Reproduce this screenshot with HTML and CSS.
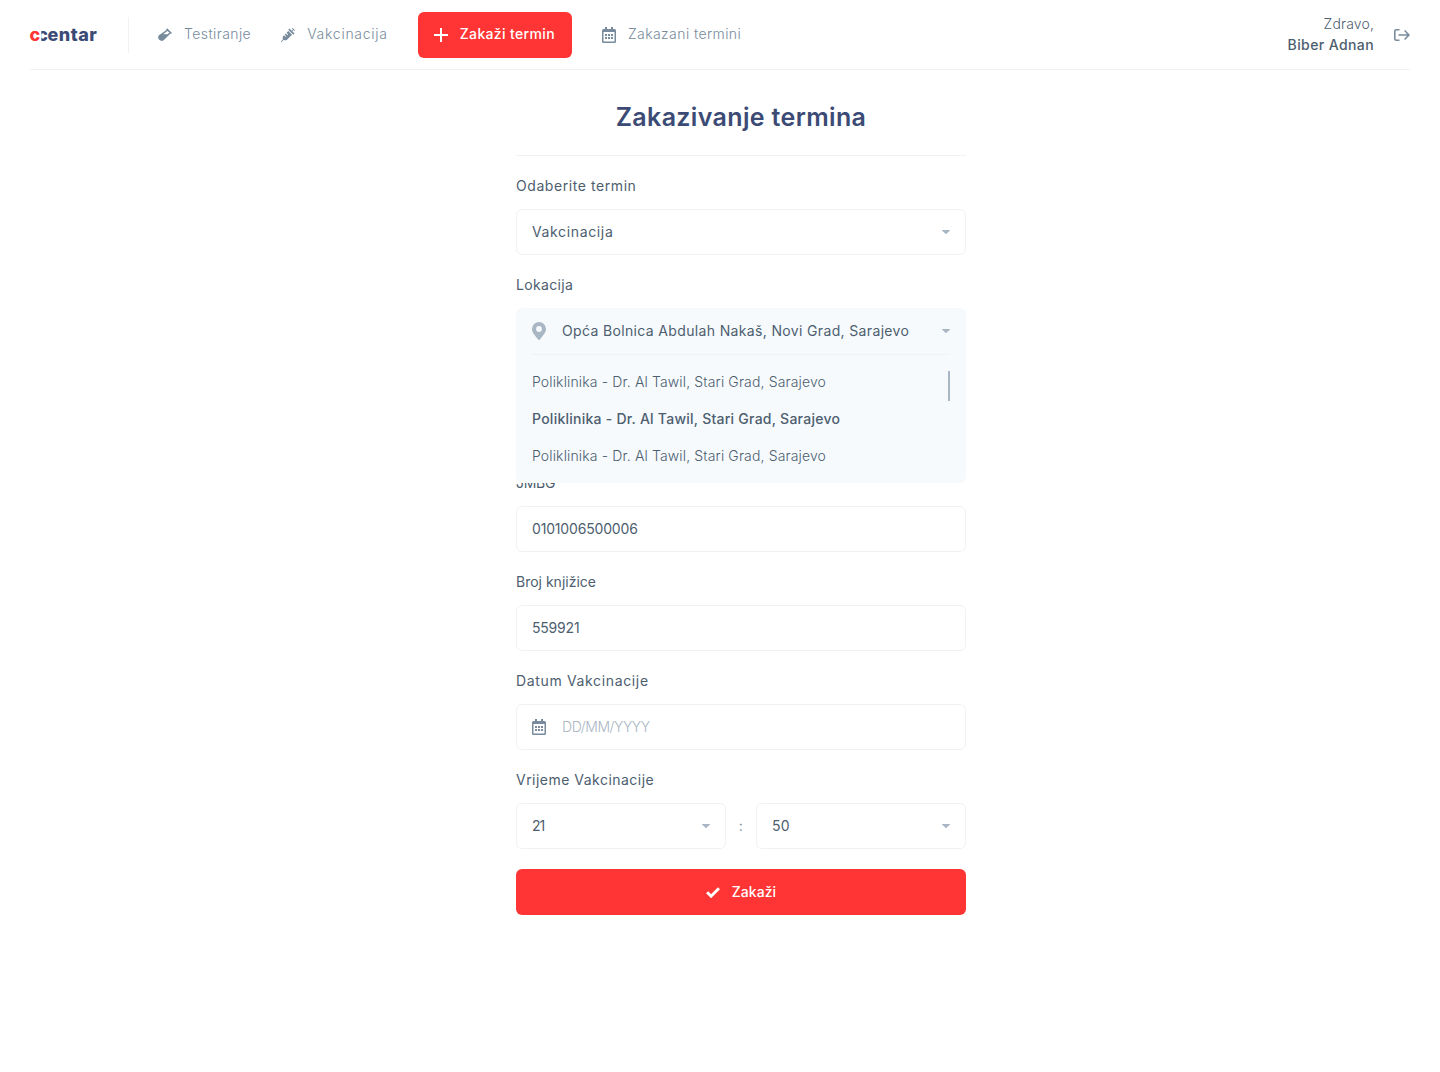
FILE: index.html
```html
<!DOCTYPE html>
<html lang="bs">
<head>
<meta charset="utf-8">
<title>Zakazivanje termina</title>
<link rel="stylesheet" href="styles.css">
</head>
<body>
<svg class="sprite" aria-hidden="true">
  <symbol id="calendar" viewBox="0 0 14 16"><path fill-rule="evenodd" d="M3 0h2v2h4V0h2v2h1.500a1.500 1.500 0 0 1 1.500 1.500v11a1.500 1.500 0 0 1-1.500 1.500h-11A1.500 1.500 0 0 1 0 14.500v-11A1.500 1.500 0 0 1 1.500 2H3zM1.500 5v9.200c0 .2.100.300.300.300h10.400c.2 0 .300-.1.300-.3V5zM3 7h2v2H3zM6 7h2v2H6zM9 7h2v2H9zM3 10h2v2H3zM6 10h2v2H6zM9 10h2v2H9z"/></symbol>
  <symbol id="caret" viewBox="0 0 8 4"><path d="M.6 0h6.800c.5 0 .7.400.400.700L4.500 3.800a.7.700 0 0 1-1 0L.2.700C-.1.400.1 0 .6 0z"/></symbol>
</svg>

<header class="header">
  <div class="logo"><span class="logo-c">c</span><span class="logo-cut">c</span><span class="logo-rest">entar</span></div>
  <nav class="nav">
    <a class="nav-item"><svg class="icon14" viewBox="0 0 14 14"><path fill-rule="evenodd" d="M9.200.3 14 4.900l-1 1-.5-.4-6.600 6.600A3.500 3.500 0 0 1 .9 7.300L8.500 1.900 8.100 1.500zM9.300 2.900 5.200 6.200h4.300l2-1.800z"/></svg><span class="text w-test">Testiranje</span></a>
    <a class="nav-item"><svg class="icon14" viewBox="0 0 512 512"><path d="M201.500 174.800l55.700 55.800c3.100 3.100 3.100 8.200 0 11.300l-11.300 11.300c-3.100 3.100-8.200 3.100-11.300 0l-55.700-55.800-45.300 45.300 55.800 55.800c3.100 3.100 3.100 8.200 0 11.300l-11.300 11.300c-3.100 3.100-8.200 3.100-11.300 0L111 265.200l-26.400 26.400c-17.300 17.300-25.600 41.100-23 65.400l7.100 63.600L2.300 487c-3.100 3.100-3.100 8.200 0 11.300l11.300 11.300c3.100 3.100 8.200 3.100 11.300 0l66.300-66.300 63.600 7.100c23.900 2.600 47.900-5.400 65.400-23l181.900-181.900-135.700-135.700-64.900 65zm308.200-93.300L430.500 2.300c-3.100-3.100-8.200-3.100-11.300 0l-11.300 11.300c-3.100 3.100-3.100 8.200 0 11.300l28.300 28.300-45.300 45.300-56.600-56.600-17-17c-3.100-3.100-8.200-3.100-11.300 0l-33.900 33.900c-3.100 3.100-3.100 8.200 0 11.300l17 17L424.800 223l17 17c3.100 3.100 8.200 3.100 11.300 0l33.900-34c3.100-3.100 3.100-8.200 0-11.300l-73.500-73.500 45.300-45.300 28.300 28.300c3.100 3.100 8.200 3.100 11.300 0l11.300-11.300c3.100-3.200 3.100-8.200 0-11.400z"/></svg><span class="text w-vak">Vakcinacija</span></a>
    <a class="nav-item nav-active"><svg class="icon14" viewBox="0 0 14 14"><path d="M6 0h2v6h6v2H8v6H6V8H0V6h6z"/></svg><span class="text">Zakaži termin</span></a>
    <a class="nav-item"><svg class="cal"><use href="#calendar"/></svg><span class="text w-term">Zakazani termini</span></a>
  </nav>
  <div class="user">
    <div class="greeting"><span class="text hello">Zdravo,</span><span class="text name">Biber Adnan</span></div>
    <svg class="logout" viewBox="0 0 16 12"><path d="M5.500.8H2.300C1.400.8.8 1.400.8 2.300v7.400c0 .9.600 1.500 1.500 1.500h3.200M4.500 6h10.300M10.600 1.500 15 6l-4.400 4.500" fill="none" stroke="currentColor" stroke-width="1.600"/></svg>
  </div>
</header>

<main class="form">
  <h1 class="title">Zakazivanje termina</h1>
  <div class="field">
    <div class="text l-oda">Odaberite termin</div>
    <div class="box"><span class="text w-sel">Vakcinacija</span><svg class="caret"><use href="#caret"/></svg></div>
  </div>
  <div class="field field-open">
    <div class="text">Lokacija</div>
    <div class="anchor">
      <div class="dropdown">
        <div class="dropdown-head">
          <svg class="pin" viewBox="0 0 14 18"><path fill-rule="evenodd" d="M7 0a7 7 0 0 1 7 7c0 2.800-1.200 4.200-6.200 10.600a1 1 0 0 1-1.600 0C1.200 11.200 0 9.800 0 7a7 7 0 0 1 7-7zm0 4.100a2.900 2.900 0 1 0 0 5.800 2.900 2.900 0 0 0 0-5.800z"/></svg>
          <span class="text">Opća Bolnica Abdulah Nakaš, Novi Grad, Sarajevo</span>
          <svg class="caret"><use href="#caret"/></svg>
        </div>
        <div class="options">
          <div class="option-list">
            <div class="option">Poliklinika - Dr. Al Tawil, Stari Grad, Sarajevo</div>
            <div class="option option-on">Poliklinika - Dr. Al Tawil, Stari Grad, Sarajevo</div>
            <div class="option">Poliklinika - Dr. Al Tawil, Stari Grad, Sarajevo</div>
          </div>
          <div class="thumb"></div>
        </div>
      </div>
    </div>
  </div>
  <div class="field">
    <div class="text l-jmbg">JMBG</div>
    <div class="box"><span class="text w-num">0101006500006</span></div>
  </div>
  <div class="field">
    <div class="text l-broj">Broj knjižice</div>
    <div class="box"><span class="text w-broj">559921</span></div>
  </div>
  <div class="field">
    <div class="text l-dat">Datum Vakcinacije</div>
    <div class="box"><svg class="cal"><use href="#calendar"/></svg><span class="text placeholder">DD/MM/YYYY</span></div>
  </div>
  <div class="field">
    <div class="text l-vri">Vrijeme Vakcinacije</div>
    <div class="time">
      <div class="box"><span class="text w-21">21</span><svg class="caret"><use href="#caret"/></svg></div>
      <span class="text colon">:</span>
      <div class="box"><span class="text">50</span><svg class="caret"><use href="#caret"/></svg></div>
    </div>
  </div>
  <button class="submit"><svg class="check" viewBox="0 0 14 11"><path d="m1.100 5.200 4 4 7.900-7.900" fill="none" stroke="currentColor" stroke-width="2.900"/></svg><span class="text">Zakaži</span></button>
</main>
</body>
</html>
```
FILE: styles.css
```css
* { box-sizing: border-box; }
body {
  margin: 0;
  background: #fff;
  color: #4d5e6f;
  font: 400 14px/21px Inter, "Open Sans", sans-serif;
  letter-spacing: .35px;
  white-space: nowrap;
}
svg { fill: currentColor; flex: none; }
.sprite { display: none; }

/* Single line of text, raised to sit on the optical centre of its row */
.text { display: block; line-height: 19px; padding-bottom: 2px; }

.header {
  display: flex;
  align-items: center;
  height: 70px;
  margin: 0 30px;
  border-bottom: 1px solid #f1f2f6;
}
.logo {
  display: flex;
  width: 99px;
  height: 36px;
  border-right: 1px solid #f1f2f6;
  font-weight: 800;
  font-size: 18px;
  line-height: 36px;
  letter-spacing: .5px;
  color: #3c4b75;
}
.logo-c { margin-left: -.5px; letter-spacing: 0; color: #ff3535; }
.logo-cut { margin-left: -3px; margin-right: -.5px; letter-spacing: 0; clip-path: inset(0 0 0 38%); }
.nav { display: flex; align-items: center; margin-left: 29px; color: #778b9c; font-weight: 300; }
.nav-item { display: flex; align-items: center; gap: 12px; margin-right: 30px; }
.nav-active {
  height: 46px;
  padding: 0 17px 0 16px;
  border-radius: 6px;
  background: #ff3535;
  color: #fff;
  font-weight: 500;
}
.w-test { letter-spacing: .42px; }
.w-vak { letter-spacing: .73px; }
.w-term { letter-spacing: .42px; }
.icon14 { width: 14px; height: 14px; }
.cal { width: 14px; height: 16px; color: #778b9c; }
.user { display: flex; align-items: center; gap: 20px; margin-left: auto; }
.greeting { display: flex; flex-direction: column; align-items: flex-end; }
.hello { font-weight: 300; letter-spacing: .15px; }
.name { font-weight: 500; letter-spacing: .4px; }
.logout { width: 16px; height: 12px; color: #778b9c; }

.form { width: 450px; margin: 0 0 0 516px; }
.title {
  height: 86px;
  margin: 0 0 20px;
  padding-top: 29px;
  border-bottom: 1px solid #f1f2f6;
  text-align: center;
  font-weight: 600;
  font-size: 25px;
  line-height: 36px;
  letter-spacing: .35px;
  color: #3c4b75;
}
.field { display: flex; flex-direction: column; gap: 12px; margin-bottom: 20px; }
.field-open { margin-bottom: 119px; }
.l-oda { letter-spacing: .57px; }
.l-jmbg { letter-spacing: -.3px; }
.l-broj { letter-spacing: 0; }
.l-dat { letter-spacing: .65px; }
.l-vri { letter-spacing: .48px; }
.w-sel { letter-spacing: .64px; }
.w-num { letter-spacing: -.17px; }
.w-broj { letter-spacing: -.2px; }
.w-21 { letter-spacing: -1px; }
.box {
  display: flex;
  align-items: center;
  gap: 16px;
  height: 46px;
  padding: 0 15px;
  border: 1px solid #f1f2f6;
  border-radius: 6px;
}
.caret { width: 8px; height: 4px; margin-left: auto; color: #a9b6c3; }
.placeholder { color: #a9b6c3; font-weight: 300; letter-spacing: -.42px; }
.anchor { position: relative; height: 46px; }
.dropdown {
  position: absolute;
  inset: 0 0 auto;
  height: 175px;
  padding: 0 16px;
  border-radius: 6px;
  background: #f6fafd;
}
.dropdown-head {
  display: flex;
  align-items: center;
  gap: 16px;
  height: 47px;
  border-bottom: 1px solid #eff2f6;
}
.pin { width: 14px; height: 18px; color: #a9b6c3; }
.options { display: flex; justify-content: space-between; padding-top: 16px; }
.option-list { display: flex; flex-direction: column; gap: 16px; }
.option { font-weight: 300; letter-spacing: .14px; }
.option-on { font-weight: 500; letter-spacing: .25px; }
.thumb { width: 2px; height: 30px; background: #a9b6c3; }
.time { display: grid; grid-template-columns: 210px 30px 210px; align-items: center; }
.colon { text-align: center; color: #778b9c; }
.submit {
  display: flex;
  align-items: center;
  justify-content: center;
  gap: 12px;
  width: 100%;
  height: 46px;
  padding: 0;
  border: 0;
  border-radius: 6px;
  background: #ff3535;
  color: #fff;
  font: inherit;
  font-weight: 500;
  letter-spacing: .05px;
}
.check { width: 14px; height: 11px; }
```
